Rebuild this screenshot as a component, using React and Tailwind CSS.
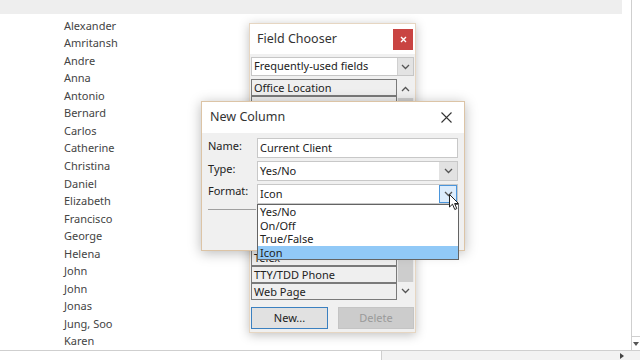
const NAMES = ['Alexander', 'Amritansh', 'Andre', 'Anna', 'Antonio', 'Bernard', 'Carlos', 'Catherine', 'Christina', 'Daniel', 'Elizabeth', 'Francisco', 'George', 'Helena', 'John', 'John', 'Jonas', 'Jung, Soo', 'Karen'];

// middle rows sit behind the New Column dialog, so they carry no label
const FIELDS = ['Office Location', '', '', '', '', '', '', '', '', '', 'Telex', 'TTY/TDD Phone', 'Web Page'];

const FORMATS = ['Yes/No', 'On/Off', 'True/False', 'Icon'];

function Chevron({ up = false, className = '' }) {
  return (
    <svg width="9" height="6" viewBox="0 0 9 6" className={className}>
      <path d={up ? 'M1 5 L4.5 1.5 L8 5' : 'M1 1 L4.5 4.5 L8 1'} fill="none" stroke="#555" strokeWidth="1.3" />
    </svg>
  );
}

function FieldChooser() {
  return (
    <div className="absolute left-[249px] top-[23px] w-[167px] h-[310px] border border-[#e6d6c2] bg-[#f0f0f0] shadow-[0_2px_10px_rgba(0,0,0,0.25)] flex flex-col">
      <div className="h-[30px] bg-white flex items-center justify-between pl-[7px] pr-[2px]">
        <span className="text-[12.5px] text-[#333] pt-[1px]">Field Chooser</span>
        <div className="w-[20px] h-[21px] bg-[#c94442] flex items-center justify-center">
          <svg width="7" height="7" viewBox="0 0 7 7">
            <path d="M1 1 L6 6 M6 1 L1 6" stroke="#fff" strokeWidth="1.4" />
          </svg>
        </div>
      </div>
      <div className="px-[1px] pt-[3px] flex flex-col">
        <div className="h-[19px] flex border border-[#c6c6c6] bg-white">
          <span className="flex-1 pl-[2px] text-[11px] leading-[16px] text-[#222]">Frequently-used fields</span>
          <div className="w-[16px] bg-[#e3e3e3] border-l border-[#d0d0d0] flex items-center justify-center">
            <Chevron />
          </div>
        </div>
        <div className="mt-[3px] flex h-[221px]">
          <div className="flex-1 flex flex-col">
            {FIELDS.map((f, i) => (
              <div key={i} className="h-[17px] border border-[#7a7a7a] bg-[#efefef] pl-[2px] text-[11px] leading-[15px] text-[#222] whitespace-nowrap overflow-hidden">
                {f}
              </div>
            ))}
          </div>
          <div className="w-[17px] flex flex-col bg-[#e8e8e8]">
            <div className="h-[19px] flex items-center justify-center bg-[#f0f0f0]">
              <Chevron up />
            </div>
            <div className="flex-1 mx-[1px] bg-[#cdcdcd]" />
            <div className="h-[18px] flex items-center justify-center bg-[#f0f0f0]">
              <Chevron />
            </div>
          </div>
        </div>
        <div className="mt-[7px] flex justify-between">
          <div className="w-[77px] h-[22px] border border-[#3b80c0] bg-[#e1e1e1] flex items-center justify-center text-[11px] text-[#222]">New...</div>
          <div className="w-[76px] h-[22px] border border-[#c4c4c4] bg-[#cccccc] flex items-center justify-center text-[11px] text-[#9a9a9a]">Delete</div>
        </div>
      </div>
    </div>
  );
}

function NewColumn() {
  return (
    <div className="absolute left-[201px] top-[101px] w-[264px] h-[150px] border border-[#dcc4a6] bg-[#f0f0f0] shadow-[0_2px_12px_rgba(0,0,0,0.28)] flex flex-col">
      <div className="h-[31px] bg-white flex items-center justify-between pl-[8px] pr-[12px]">
        <span className="text-[12.5px] text-[#333]">New Column</span>
        <svg width="11" height="11" viewBox="0 0 11 11">
          <path d="M0.5 0.5 L10.5 10.5 M10.5 0.5 L0.5 10.5" stroke="#333" strokeWidth="1.1" />
        </svg>
      </div>
      <div className="pl-[6px] pr-[6px] pt-[5px] flex flex-col gap-[3px] text-[11px] text-[#222]">
        <div className="flex items-start">
          <span className="w-[49px] leading-[16px]">Name:</span>
          <div className="flex-1 h-[20px] bg-white border border-[#c8c8c8] pl-[2px] leading-[18px]">Current Client</div>
        </div>
        <div className="flex items-start">
          <span className="w-[49px] leading-[16px]">Type:</span>
          <div className="flex-1 h-[20px] bg-white border border-[#c8c8c8] flex">
            <span className="flex-1 pl-[2px] leading-[18px]">Yes/No</span>
            <div className="w-[18px] bg-[#e2e2e2] flex items-center justify-center"><Chevron /></div>
          </div>
        </div>
        <div className="flex items-start">
          <span className="w-[49px] leading-[14px]">Format:</span>
          <div className="relative flex-1 h-[20px] bg-white border border-[#c8c8c8] flex">
            <span className="flex-1 pl-[2px] leading-[18px]">Icon</span>
            <div className="w-[18px] bg-[#dcecfc] border border-[#4a95db] flex items-center justify-center"><Chevron /></div>
          </div>
        </div>
        <div className="mt-[2px] w-[48px] h-[1px] bg-[#a0a0a0]" />
      </div>
      <div className="absolute left-[55px] top-[102px] w-[202px] border border-[#646464] bg-white text-[11px] text-[#222] flex flex-col z-10">
        {FORMATS.map((f, i) => (
          <div key={f} className={`h-[13.5px] leading-[13.5px] pl-[2px] ${i === 3 ? 'bg-[#91c9f7]' : ''}`}>{f}</div>
        ))}
      </div>
      <svg className="absolute left-[247px] top-[92px] z-20" width="11" height="17" viewBox="0 0 11 17">
        <path d="M0.5 0.5 L0.5 13 L3.5 10.2 L5.8 15.5 L7.8 14.6 L5.6 9.5 L9.5 9.5 Z" fill="#fff" stroke="#222" strokeWidth="1" strokeLinejoin="round" />
      </svg>
    </div>
  );
}

export default function App() {
  return (
    <div className="relative w-[640px] h-[360px] overflow-hidden bg-white flex flex-col" style={{ fontFamily: '"Segoe UI", "Noto Sans", Lato, sans-serif' }}>
      <div className="flex h-[350px]">
        <div className="flex-1 flex flex-col">
          <div className="h-[15px] w-[622px] bg-[#eeeeee]" />
          <div className="pl-[64px] pt-[3px] flex flex-col">
            {NAMES.map((n, i) => (
              <div key={i} className="h-[17.55px] leading-[17.55px] text-[11px] text-[#444]">{n}</div>
            ))}
          </div>
        </div>
        <div className="w-[9px] border-l border-[#cfcfcf] flex flex-col justify-end">
          <div className="h-[14px] border-t border-[#cfcfcf] flex items-center justify-center">
            <svg width="6" height="4" viewBox="0 0 6 4"><path d="M0 0 L6 0 L3 4 Z" fill="#555" /></svg>
          </div>
        </div>
      </div>
      <div className="flex h-[10px] border-t border-[#cfcfcf]">
        <div className="w-[382px] border-r border-[#cfcfcf] bg-white" />
        <div className="flex-1 bg-[#f2f2f2] flex items-center justify-end pr-[16px]">
          <svg width="4" height="6" viewBox="0 0 4 6"><path d="M0 0 L4 3 L0 6 Z" fill="#444" /></svg>
        </div>
      </div>
      <FieldChooser />
      <NewColumn />
    </div>
  );
}
